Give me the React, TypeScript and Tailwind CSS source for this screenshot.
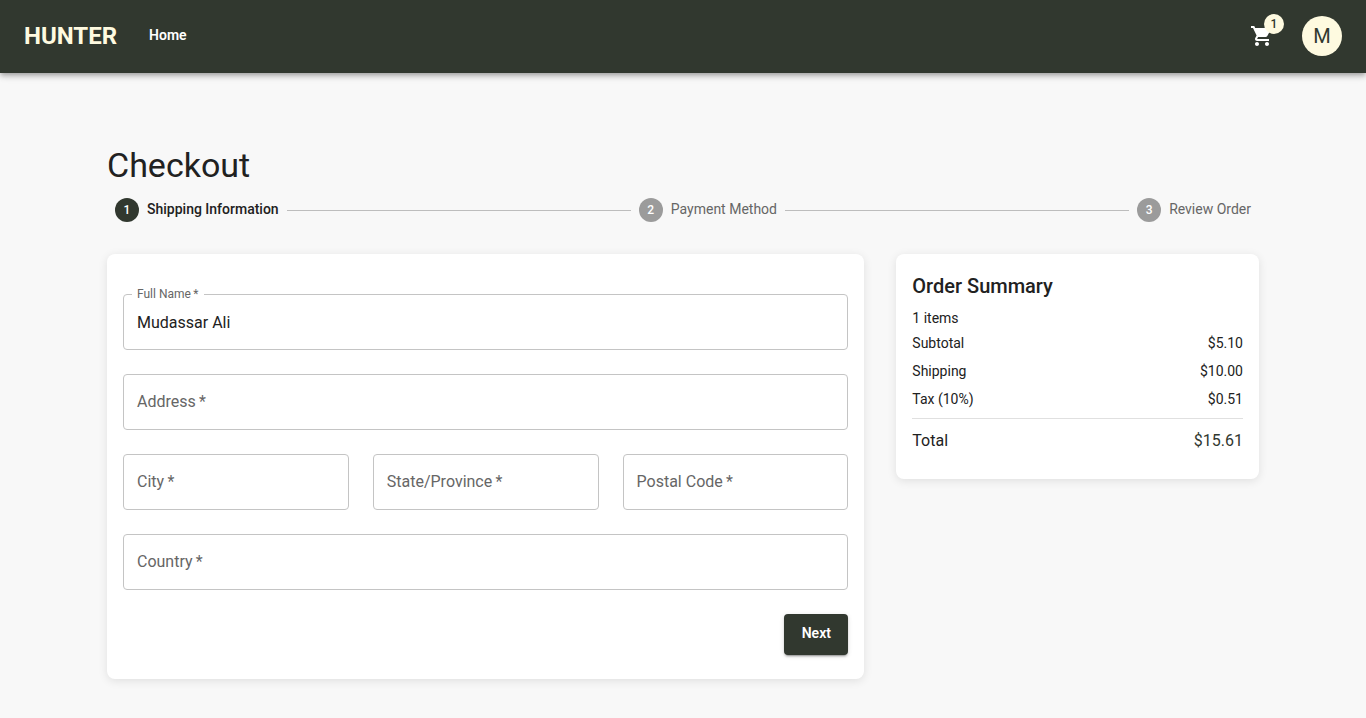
import { Fragment, useState } from "react";
import { MdShoppingCart } from "react-icons/md";

const steps = ["Shipping Information", "Payment Method", "Review Order"];

const charges = [
  { name: "Subtotal", amount: "$5.10" },
  { name: "Shipping", amount: "$10.00" },
  { name: "Tax (10%)", amount: "$0.51" },
];

function Header() {
  return (
    <header className="flex h-[73px] items-center justify-between border-b border-[#31382f] bg-[#31382f] px-6 pb-px shadow-[0_2px_4px_-1px_rgba(0,0,0,0.2),0_4px_5px_rgba(0,0,0,0.14),0_1px_10px_rgba(0,0,0,0.12)]">
      <nav className="flex items-center gap-8">
        <a href="#" className="text-2xl font-bold text-[#fefae0]">
          HUNTER
        </a>
        <a href="#" className="pb-0.5 text-sm font-semibold text-white">
          Home
        </a>
      </nav>
      <div className="flex items-center gap-7">
        <button type="button" aria-label="Cart, 1 item" className="relative text-white">
          <MdShoppingCart size={24} />
          <span className="absolute -top-2.5 -right-2.5 flex size-5 items-center justify-center rounded-full bg-[#fefae0] text-xs font-medium text-[#31382f]">
            1
          </span>
        </button>
        <button
          type="button"
          aria-label="Account"
          className="flex size-10 items-center justify-center rounded-full bg-[#fefae0] text-xl text-[#31382f]"
        >
          M
        </button>
      </div>
    </header>
  );
}

function Stepper({ active }: { active: number }) {
  return (
    <ol className="flex items-center gap-2 px-2 text-sm">
      {steps.map((step, i) => (
        <Fragment key={step}>
          {i > 0 && <li aria-hidden="true" className="h-px flex-1 bg-[#bdbdbd]" />}
          <li className="flex items-center gap-2">
            <span
              className={
                i === active
                  ? "flex size-6 items-center justify-center rounded-full bg-[#31382f] text-xs font-medium text-white"
                  : "flex size-6 items-center justify-center rounded-full bg-[#9b9b9b] text-xs font-medium text-white"
              }
            >
              {i + 1}
            </span>
            <span className={i === active ? "pb-0.5 font-medium text-[#212121]" : "pb-0.5 text-[#666666]"}>
              {step}
            </span>
          </li>
        </Fragment>
      ))}
    </ol>
  );
}

type FieldProps = { id: string; label: string; initial?: string; wide?: boolean };

function Field({ id, label, initial = "", wide = false }: FieldProps) {
  const [value, setValue] = useState(initial);
  return (
    <div className={wide ? "relative col-span-3" : "relative"}>
      <input
        id={id}
        required
        placeholder=" "
        value={value}
        onChange={(e) => setValue(e.target.value)}
        className="peer block h-14 w-full rounded-sm border border-[#c4c4c4] bg-white px-[13px] text-base text-[#212121] outline-none focus:border-[#31382f]"
      />
      <label
        htmlFor={id}
        className="pointer-events-none absolute -top-2 left-[9px] bg-white px-[5px] text-xs leading-4 text-[#666666] peer-placeholder-shown:top-4 peer-placeholder-shown:text-base peer-placeholder-shown:leading-6 peer-focus:-top-2 peer-focus:text-xs peer-focus:leading-4"
      >
        {label}
        {"\u2009*"}
      </label>
    </div>
  );
}

function ShippingForm() {
  return (
    <form
      onSubmit={(e) => e.preventDefault()}
      className="col-span-2 grid grid-cols-3 gap-6 rounded-lg bg-white px-4 pt-10 pb-6 shadow-[0_2px_10px_rgba(0,0,0,0.1)]"
    >
      <Field id="fullName" label="Full Name" initial="Mudassar Ali" wide />
      <Field id="address" label="Address" wide />
      <Field id="city" label="City" />
      <Field id="state" label="State/Province" />
      <Field id="postalCode" label="Postal Code" />
      <Field id="country" label="Country" wide />
      <div className="col-span-3 flex justify-end">
        <button
          type="submit"
          className="h-[41px] w-16 rounded-sm bg-[#31382f] pb-1 text-sm font-semibold text-white shadow-[0_3px_1px_-2px_rgba(0,0,0,0.2),0_2px_2px_rgba(0,0,0,0.14),0_1px_5px_rgba(0,0,0,0.12)]"
        >
          Next
        </button>
      </div>
    </form>
  );
}

function OrderSummary() {
  return (
    <section className="rounded-lg bg-white p-4 text-sm text-[#212121] shadow-[0_2px_10px_rgba(0,0,0,0.1)]">
      <h2 className="text-xl leading-8 font-medium">Order Summary</h2>
      <p className="pt-1.5">1 items</p>
      <dl className="pt-px">
        {charges.map((charge) => (
          <div key={charge.name} className="flex justify-between py-1">
            <dt>{charge.name}</dt>
            <dd>{charge.amount}</dd>
          </div>
        ))}
        <div className="mt-[5px] flex justify-between border-t border-[#e0e0e0] py-2.5 text-base">
          <dt>Total</dt>
          <dd className="text-[#31382f]">$15.61</dd>
        </div>
      </dl>
    </section>
  );
}

export default function App() {
  return (
    <div className="min-h-screen bg-[#f8f8f8] font-[Roboto,sans-serif]">
      <Header />
      <main className="mx-auto max-w-[1200px] px-6 pt-[71px] pb-8">
        <h1 className="pb-3 text-[34px] leading-[42px] text-[#212121]">Checkout</h1>
        <Stepper active={0} />
        <div className="grid grid-cols-3 items-start gap-8 pt-8">
          <ShippingForm />
          <OrderSummary />
        </div>
      </main>
    </div>
  );
}
